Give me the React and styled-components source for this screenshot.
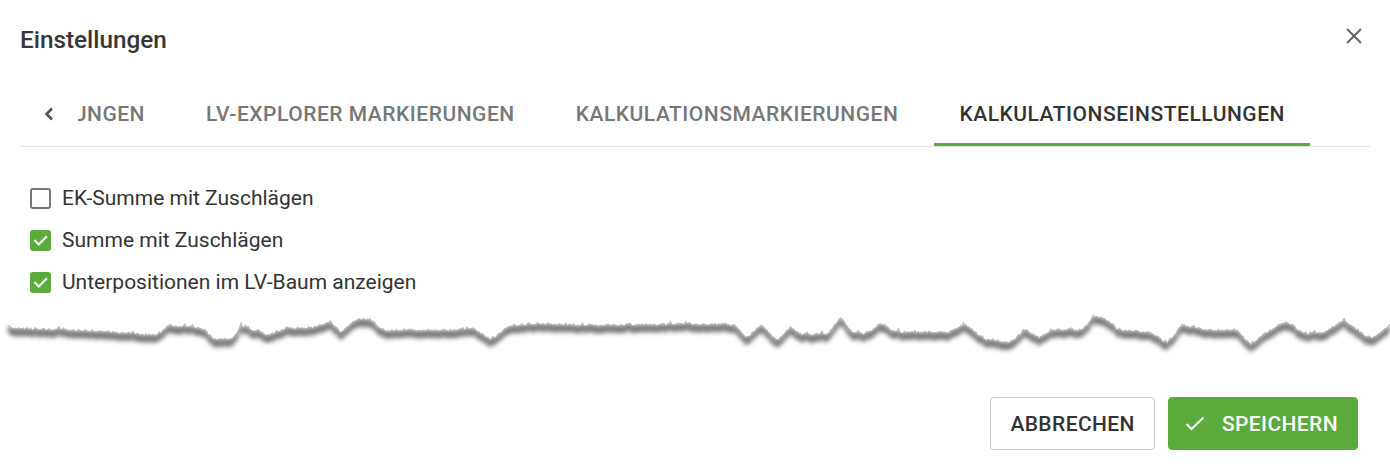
import React from "react";
import styled, { createGlobalStyle } from "styled-components";

const GREEN = "#5aab3b";

const GlobalStyle = createGlobalStyle`
  html, body {
    margin: 0;
    padding: 0;
    background: #fff;
  }
  body {
    font-family: Roboto, "Liberation Sans", Arial, sans-serif;
    color: #333;
  }
`;

const Dialog = styled.div`
  width: 1390px;
  height: 466px;
  display: flex;
  flex-direction: column;
  background: #fff;
  overflow: hidden;
`;

const Header = styled.div`
  height: 78px;
  display: flex;
  align-items: center;
  justify-content: space-between;
  padding: 0 28px 0 20px;
`;

const Title = styled.h2`
  margin: 0;
  font-size: 24.3px;
  font-weight: 500;
  color: #363636;
`;

const IconButton = styled.button`
  border: 0;
  background: none;
  padding: 0;
  display: flex;
  align-items: center;
  justify-content: center;
  cursor: pointer;
`;

const CloseButton = styled(IconButton)`
  width: 16px;
  height: 16px;
  margin-bottom: 6px;
`;

const TabsBar = styled.div`
  margin: 4px 20px 0;
  height: 64px;
  display: flex;
  border-bottom: 1px solid #e0e0e0;
`;

const ScrollButton = styled(IconButton)`
  width: 58px;
  flex-shrink: 0;
`;

const TabScroller = styled.div`
  flex: 1;
  display: flex;
  justify-content: flex-end;
  gap: 11px;
  overflow: hidden;
  margin-right: 60px;
`;

const Tab = styled.div`
  position: relative;
  flex-shrink: 0;
  display: flex;
  align-items: center;
  padding: 0 25px;
  font-size: 21px;
  font-weight: 500;
  letter-spacing: 0.52px;
  text-transform: uppercase;
  white-space: nowrap;
  color: ${(p) => (p.$active ? "#333" : "#777")};

  &::after {
    content: "";
    position: absolute;
    left: 0;
    right: 0;
    bottom: 0;
    height: 3px;
    background: ${(p) => (p.$active ? GREEN : "transparent")};
  }
`;

const OptionList = styled.div`
  padding: 30px 30px 0;
  display: flex;
  flex-direction: column;
`;

const OptionRow = styled.label`
  height: 42px;
  display: flex;
  align-items: center;
  gap: 11px;
  font-size: 21px;
  color: #333;
`;

const Box = styled.span`
  width: 21px;
  height: 21px;
  box-sizing: border-box;
  border-radius: 3px;
  display: flex;
  align-items: center;
  justify-content: center;
  border: ${(p) => (p.$checked ? "0" : "2px solid #767676")};
  background: ${(p) => (p.$checked ? GREEN : "#fff")};
`;

const Tear = styled.svg`
  display: block;
  flex-shrink: 0;
`;

const Footer = styled.div`
  margin-top: auto;
  display: flex;
  justify-content: flex-end;
  gap: 13px;
  padding: 0 32px 16px;
`;

const Button = styled.button`
  height: 53px;
  box-sizing: border-box;
  display: flex;
  align-items: center;
  gap: 17px;
  border-radius: 4px;
  font-family: inherit;
  font-size: 21px;
  font-weight: 500;
  letter-spacing: 0.4px;
  text-transform: uppercase;
  cursor: pointer;
  padding: ${(p) => (p.$primary ? "0 19px 0 16px" : "0 19px")};
  border: 1px solid ${(p) => (p.$primary ? GREEN : "#c8c8c8")};
  background: ${(p) => (p.$primary ? GREEN : "#fff")};
  color: ${(p) => (p.$primary ? "#fff" : "#333")};
`;

const BoxCheck = () => (
  <svg width="17" height="17" viewBox="0 0 24 24">
    <polyline
      points="4.5,12.5 9.5,17.5 20,7"
      fill="none"
      stroke="#fff"
      strokeWidth="3"
      strokeLinecap="square"
    />
  </svg>
);

const ButtonCheck = () => (
  <svg width="20" height="20" viewBox="0 0 20 20">
    <polyline
      points="1.5,10 6.5,15 18.5,3.5"
      fill="none"
      stroke="#fff"
      strokeWidth="2"
    />
  </svg>
);

// torn paper edge, key points sampled along the tear
const EDGE_KEYS = [
  [8, 328], [80, 330], [156, 335], [170, 325], [201, 328], [214, 339],
  [232, 339], [241, 326], [268, 335], [286, 328], [312, 328], [330, 321],
  [341, 332], [357, 319], [370, 319], [384, 331], [402, 330], [464, 330],
  [473, 328], [491, 340], [509, 326], [536, 324], [600, 325], [696, 324],
  [735, 325], [746, 338], [762, 325], [777, 341], [790, 327], [801, 334],
  [828, 334], [841, 317], [852, 332], [867, 334], [881, 323], [894, 332],
  [950, 332], [964, 324], [982, 338], [1008, 343], [1026, 330], [1039, 338],
  [1052, 330], [1083, 330], [1092, 317], [1105, 318], [1118, 330],
  [1149, 332], [1167, 343], [1182, 325], [1207, 330], [1237, 330],
  [1251, 345], [1264, 334], [1286, 321], [1304, 334], [1326, 332],
  [1343, 320], [1365, 336], [1374, 338], [1390, 325],
];
const TEAR_TOP = 303;

function edgePoints() {
  let seed = 11;
  const rand = () => {
    seed = (seed * 16807) % 2147483647;
    return seed / 2147483647;
  };
  const pts = [];
  for (let i = 0; i < EDGE_KEYS.length - 1; i++) {
    const [x0, y0] = EDGE_KEYS[i];
    const [x1, y1] = EDGE_KEYS[i + 1];
    for (let x = x0; x < x1; x += 1.5) {
      const t = (x - x0) / (x1 - x0);
      const spike = rand() < 0.12 ? -rand() * 3 : 0;
      const y = y0 + (y1 - y0) * t + (rand() - 0.5) * 2.4 + spike;
      pts.push([x, y - TEAR_TOP]);
    }
  }
  const last = EDGE_KEYS[EDGE_KEYS.length - 1];
  pts.push([last[0], last[1] - TEAR_TOP]);
  return pts;
}

function TornEdge() {
  const pts = edgePoints();
  const line = pts.map(([x, y]) => `${x},${y.toFixed(1)}`).join(" L");
  const back = pts
    .slice()
    .reverse()
    .map(([x, y]) => `${x},${(y + 8).toFixed(1)}`)
    .join(" L");
  const first = pts[0];
  const paper = `M${first[0]},0 L${line} L1390,0 Z`;
  const shadow = `M${line} L${back} Z`;

  return (
    <Tear width="1390" height="60" viewBox="0 0 1390 60">
      <defs>
        <filter id="tear-blur" x="-2%" y="-60%" width="104%" height="220%">
          <feGaussianBlur stdDeviation="2.3" />
        </filter>
      </defs>
      <path d={shadow} fill="#7a7a7a" filter="url(#tear-blur)" />
      <path d={paper} fill="#fff" />
      <path d={`M${line}`} fill="none" stroke="#a0a0a0" strokeWidth="0.6" />
    </Tear>
  );
}

const tabs = [
  "Allgemeine Einstellungen",
  "LV-Explorer Markierungen",
  "Kalkulationsmarkierungen",
  "Kalkulationseinstellungen",
];

const options = [
  { label: "EK-Summe mit Zuschlägen", checked: false },
  { label: "Summe mit Zuschlägen", checked: true },
  { label: "Unterpositionen im LV-Baum anzeigen", checked: true },
];

export default function App() {
  return (
    <>
      <GlobalStyle />
      <Dialog>
        <Header>
          <Title>Einstellungen</Title>
          <CloseButton aria-label="Schließen">
            <svg width="16" height="16" viewBox="0 0 16 16">
              <path d="M1 1 L15 15 M15 1 L1 15" stroke="#666" strokeWidth="2" />
            </svg>
          </CloseButton>
        </Header>

        <TabsBar>
          <ScrollButton aria-label="zurück">
            <svg width="10" height="14" viewBox="0 0 10 14">
              <polyline
                points="8,1.5 2.5,7 8,12.5"
                fill="none"
                stroke="#555"
                strokeWidth="2.6"
              />
            </svg>
          </ScrollButton>
          <TabScroller>
            {tabs.map((t, i) => (
              <Tab key={t} $active={i === tabs.length - 1}>
                {t}
              </Tab>
            ))}
          </TabScroller>
        </TabsBar>

        <OptionList>
          {options.map((o) => (
            <OptionRow key={o.label}>
              <Box $checked={o.checked}>{o.checked && <BoxCheck />}</Box>
              {o.label}
            </OptionRow>
          ))}
        </OptionList>

        <TornEdge />

        <Footer>
          <Button>Abbrechen</Button>
          <Button $primary>
            <ButtonCheck />
            Speichern
          </Button>
        </Footer>
      </Dialog>
    </>
  );
}
